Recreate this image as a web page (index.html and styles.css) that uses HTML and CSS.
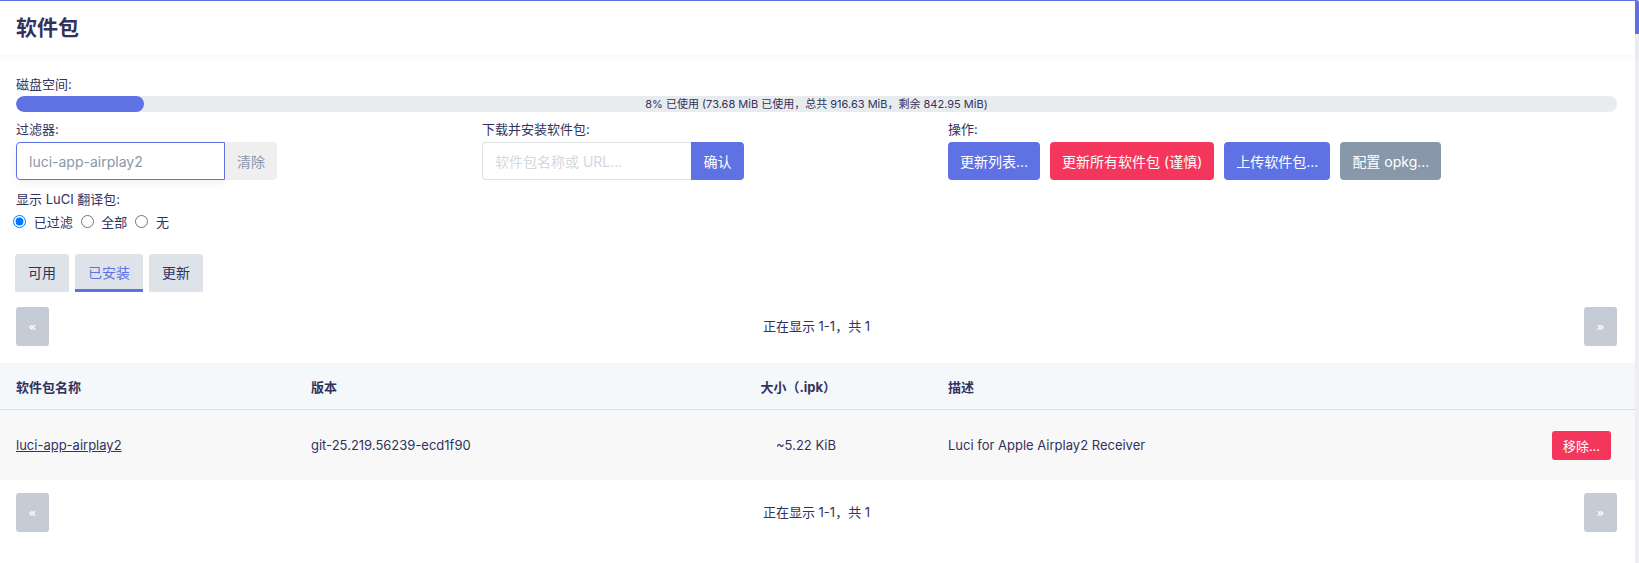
FILE: index.html
```html
<!DOCTYPE html>
<html lang="zh-CN">
<head>
<meta charset="utf-8">
<title>软件包</title>
<link rel="stylesheet" href="styles.css">
</head>
<body>
<div class="page">
  <header class="topbar"><h2 class="title">软件包</h2></header>
  <main class="main">
    <div class="label disk-label">磁盘空间:</div>
    <div class="progress">
      <div class="progress-fill" style="width:8%"></div>
      <div class="progress-text">8% 已使用 (73.68 MiB 已使用，总共 916.63 MiB，剩余 842.95 MiB)</div>
    </div>

    <div class="controls">
      <div class="ctl">
        <div class="label">过滤器:</div>
        <div class="group">
          <input class="field field-focus" type="text" value="luci-app-airplay2">
          <button class="btn btn-clear">清除</button>
        </div>
        <div class="label lang-label">显示 LuCI 翻译包:</div>
        <div class="radios">
          <label class="radio"><input type="radio" name="lang" checked> 已过滤</label>
          <label class="radio"><input type="radio" name="lang"> 全部</label>
          <label class="radio"><input type="radio" name="lang"> 无</label>
        </div>
      </div>
      <div class="ctl">
        <div class="label">下载并安装软件包:</div>
        <div class="group">
          <input class="field" type="text" placeholder="软件包名称或 URL...">
          <button class="btn btn-blue btn-confirm">确认</button>
        </div>
      </div>
      <div class="ctl">
        <div class="label">操作:</div>
        <div class="actions">
          <button class="btn btn-blue">更新列表...</button>
          <button class="btn btn-red">更新所有软件包 (谨慎)</button>
          <button class="btn btn-blue">上传软件包...</button>
          <button class="btn btn-gray">配置 opkg...</button>
        </div>
      </div>
    </div>

    <div class="tabs">
      <div class="tab">可用</div>
      <div class="tab tab-active">已安装</div>
      <div class="tab">更新</div>
    </div>

    <div class="pager">
      <button class="pg-btn">«</button>
      <span class="pg-text">正在显示 1-1，共 1</span>
      <button class="pg-btn">»</button>
    </div>

    <table class="pkg-table">
      <colgroup>
        <col class="w-name">
        <col class="w-ver">
        <col class="w-size">
        <col>
        <col class="w-act">
      </colgroup>
      <thead>
        <tr>
          <th>软件包名称</th>
          <th>版本</th>
          <th class="c-size">大小（.ipk）</th>
          <th>描述</th>
          <th></th>
        </tr>
      </thead>
      <tbody>
        <tr>
          <td><a class="pkg-link" href="#">luci-app-airplay2</a></td>
          <td>git-25.219.56239-ecd1f90</td>
          <td class="c-size">~5.22 KiB</td>
          <td>Luci for Apple Airplay2 Receiver</td>
          <td class="c-act"><button class="btn btn-red btn-sm">移除...</button></td>
        </tr>
      </tbody>
    </table>

    <div class="pager pager-bottom">
      <button class="pg-btn">«</button>
      <span class="pg-text">正在显示 1-1，共 1</span>
      <button class="pg-btn">»</button>
    </div>
  </main>
</div>
<div class="scrollbar"><div class="thumb"></div></div>
</body>
</html>
```

FILE: styles.css
```css
* { box-sizing: border-box; }

html, body {
  margin: 0;
  padding: 0;
  height: 100%;
}

body {
  display: flex;
  overflow: hidden;
  background: #ffffff;
  color: #32325d;
  font-family: "Inter", "Noto Sans CJK SC", sans-serif;
  font-size: 13px;
}

.page {
  flex: 1;
  min-width: 0;
  border-top: 1px solid #5e72e4;
}

.scrollbar {
  width: 4px;
  background: #ededf2;
}

.thumb {
  height: 34px;
  background: #5e72e4;
  border-top-right-radius: 3px;
}

.topbar {
  height: 54px;
  padding-left: 16px;
  background: #fff;
  box-shadow: 0 3px 8px rgba(0, 0, 0, 0.035);
  position: relative;
}

.title {
  margin: 0;
  font-size: 21px;
  line-height: 54px;
  font-weight: 700;
  color: #32325d;
}

.main {
  padding: 0 18px 0 16px;
}

.label {
  font-size: 13px;
  line-height: 18px;
  color: #32325d;
}

.disk-label {
  margin-top: 20px;
}

.progress {
  margin-top: 3px;
  height: 16px;
  border-radius: 8px;
  background: #e9ecef;
  display: grid;
  overflow: hidden;
}

.progress-fill,
.progress-text {
  grid-area: 1 / 1;
}

.progress-fill {
  height: 16px;
  background: #5e72e4;
  border-radius: 8px;
}

.progress-text {
  text-align: center;
  font-size: 11px;
  line-height: 16px;
  color: #32325d;
}

.controls {
  margin-top: 8px;
  display: grid;
  grid-template-columns: 466px 466px 1fr;
  align-items: start;
}

.group {
  margin-top: 4px;
  display: flex;
  height: 38px;
}

.field {
  width: 209px;
  height: 38px;
  border: 1px solid #dee2e6;
  border-right: none;
  border-radius: 4px 0 0 4px;
  padding: 0 12px;
  font-family: "Inter", "Noto Sans CJK SC", sans-serif;
  font-size: 14px;
  color: #8898aa;
  background: #fff;
  outline: none;
}

.field::placeholder {
  color: #d4d8e0;
}

.field-focus {
  border: 1px solid #5e72e4;
  box-shadow: 0 3px 8px rgba(50, 50, 93, 0.08);
}

.btn {
  display: inline-flex;
  align-items: center;
  justify-content: center;
  height: 38px;
  padding: 0 12px;
  border: none;
  border-radius: 4px;
  font-family: "Inter", "Noto Sans CJK SC", sans-serif;
  font-size: 14px;
  color: #fff;
  white-space: nowrap;
  cursor: pointer;
}

.btn-clear {
  width: 52px;
  padding: 0;
  background: #efefef;
  color: #8898aa;
  border-radius: 0 4px 4px 0;
}

.btn-confirm {
  width: 53px;
  padding: 0;
  border-radius: 0 4px 4px 0;
}

.btn-blue { background: #5e72e4; }
.btn-red { background: #f5365c; }
.btn-gray { background: #8898aa; }

.lang-label {
  margin-top: 10px;
}

.radios {
  margin-top: 4px;
  margin-left: -11px;
  display: flex;
  align-items: center;
  height: 18px;
}

.radio {
  display: inline-flex;
  align-items: center;
  font-size: 13px;
  white-space: pre;
}

.radio input {
  margin: 0 4px 0 8px;
  width: 13px;
  height: 13px;
}

.actions {
  margin-top: 4px;
  display: flex;
  gap: 10px;
}

.tabs {
  margin-top: 24px;
  display: flex;
  gap: 6px;
  margin-left: -1px;
}

.tab {
  height: 38px;
  padding: 0 13px;
  background: #dee3e9;
  border-radius: 3px 3px 0 0;
  font-size: 14px;
  line-height: 38px;
  color: #32325d;
}

.tab-active {
  color: #5e72e4;
  box-shadow: inset 0 -3px 0 #5e72e4;
}

.pager {
  margin-top: 15px;
  display: flex;
  justify-content: space-between;
  align-items: center;
}

.pager-bottom {
  margin-top: 13px;
}

.pg-btn {
  width: 33px;
  height: 39px;
  border: none;
  border-radius: 3px;
  background: #c5ccd6;
  color: #fff;
  font-family: "DejaVu Sans", sans-serif;
  font-size: 12px;
  font-weight: 700;
  padding: 0;
}

.pg-text {
  font-size: 13px;
  color: #32325d;
  margin-bottom: 3px;
}

.pkg-table {
  margin: 17px -18px 0 -16px;
  width: calc(100% + 34px);
  border-collapse: separate;
  border-spacing: 0;
  table-layout: fixed;
}

.w-name { width: 295px; }
.w-ver { width: 316px; }
.w-size { width: 321px; }
.w-act { width: 110px; }

.pkg-table th {
  height: 47px;
  padding: 0 16px;
  background: #f5f8fb;
  border-bottom: 1px solid #dcdde0;
  text-align: left;
  font-size: 13px;
  font-weight: 700;
  color: #32325d;
}

.pkg-table td {
  height: 70px;
  padding: 0 16px;
  background: #f8f8f8;
  font-size: 13px;
  color: #32325d;
  white-space: nowrap;
}

.pkg-table .c-size {
  text-align: right;
  padding-right: 96px;
}

.pkg-table .c-act {
  text-align: right;
  padding-right: 24px;
}

.pkg-link {
  color: #32325d;
  text-decoration: underline;
}

.btn-sm {
  height: 29px;
  width: 59px;
  padding: 0;
  font-size: 13px;
  border-radius: 3px;
}
```
